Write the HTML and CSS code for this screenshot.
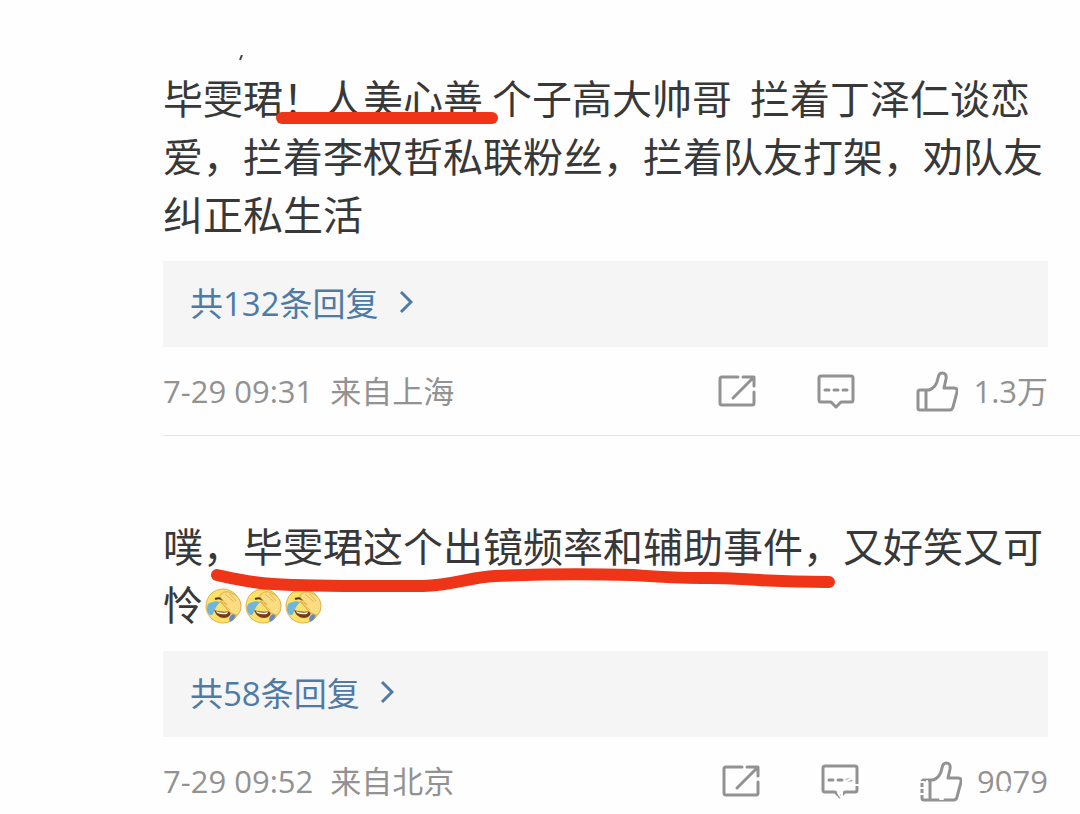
FILE: index.html
```
<!DOCTYPE html>
<html lang="zh-CN">
<head>
  <meta charset="UTF-8">
  <meta name="viewport" content="width=device-width, initial-scale=1.0">
  <title>评论</title>
  <link rel="stylesheet" href="styles.css">
</head>
<body>
  <!-- shared icons -->
  <svg class="sprite" aria-hidden="true">
    <symbol id="icon-share" viewBox="0 0 38 38">
      <path d="M20 5H4q-2 0-2 2v24q0 2 2 2h30q2 0 2-2V20M25 5h11v9M35 6L15 26"/>
    </symbol>
    <symbol id="icon-comment" viewBox="0 0 38 38">
      <path d="M4 4h30q2 0 2 2v22q0 2-2 2h-10l-5 5-5-5H4q-2 0-2-2V6q0-2 2-2z"/>
      <path d="M8 18h4M17 18h4M26 18h4"/>
    </symbol>
    <symbol id="icon-like" viewBox="0 0 42 42">
      <path d="M10 20h3c6-2 8-6 9-12q1-5 4-5 5 0 4 6l-2 9h10q4 0 3 4l-4 15q-1 3-3 3H4q-2 0-2-2V22q0-2 2-2h6v19"/>
    </symbol>
    <symbol id="icon-laugh" viewBox="0 0 40 40">
      <circle cx="20" cy="20" r="17" fill="#fbe06a" stroke="#e0b445"/>
      <path d="M11 24q8 3 17 1 0 7-7 7-7 0-10-8z" fill="#7a3a16"/>
      <path d="M13 25q6 3 12 1l-1 2q-5 1-10-1z" fill="#fff"/>
      <path d="M12 13q5-2 8 1" fill="none" stroke="#4f3a1e" stroke-width="2"/>
      <path d="M5 18q6-4 12-2-4 4-6 9-1 5-4 4-5-4-2-11z" fill="#6fb6dd"/>
      <path d="M26 33q2-6 7-5-1 6-6 8z" fill="#6688c4"/>
      <path d="M18 8q5-4 10-1 9 3 10 12 0 9-5 10-6-1-10-7l-6-7 7 4-7-8q0-2 1-3z" fill="#fbdc80" stroke="#dfae4c"/>
      <path d="M22 8l9 8M27 8l6 7M17 16l10 8" fill="none" stroke="#e3b456"/>
    </symbol>
  </svg>

  <main class="comments">
    <div class="cut-line" aria-hidden="true"><svg viewBox="0 0 6 6"><path d="M4 0L2 5"/></svg></div>

    <article class="comment">
      <p class="text">毕雯珺！人美心善&nbsp;个子高大帅哥&nbsp;&nbsp;拦着丁泽仁谈恋爱，拦着李权哲私联粉丝，拦着队友打架，劝队友纠正私生活
        <svg class="stroke stroke-short" viewBox="0 0 224 14"><path d="M7 7H217"/></svg>
      </p>
      <a class="replies" href="#">共132条回复<svg viewBox="0 0 14 24"><path d="M2 2l10 10L2 22"/></svg></a>
      <footer class="meta">
        <span class="info"><time>7-29 09:31</time><span>来自上海</span></span>
        <button type="button" aria-label="转发"><svg><use href="#icon-share"/></svg></button>
        <button type="button" aria-label="评论"><svg><use href="#icon-comment"/></svg></button>
        <button type="button" class="like"><svg><use href="#icon-like"/></svg>1.3万</button>
      </footer>
    </article>

    <article class="comment">
      <p class="text">噗，毕雯珺这个出镜频率和辅助事件，又好笑又可怜<svg class="emoji" role="img" aria-label="笑哭"><use href="#icon-laugh"/></svg><svg class="emoji" role="img" aria-label="笑哭"><use href="#icon-laugh"/></svg><svg class="emoji" role="img" aria-label="笑哭"><use href="#icon-laugh"/></svg>
        <svg class="stroke stroke-long" viewBox="0 0 624 26"><path d="M6 7C24 11 40 15 62 16C110 19 170 18 212 18C242 17 260 9 284 8Q350 5 422 7C450 9 460 10 490 10C530 9 540 14 618 14"/></svg>
      </p>
      <a class="replies" href="#">共58条回复<svg viewBox="0 0 14 24"><path d="M2 2l10 10L2 22"/></svg></a>
      <footer class="meta">
        <span class="info"><time>7-29 09:52</time><span>来自北京</span></span>
        <button type="button" aria-label="转发"><svg><use href="#icon-share"/></svg></button>
        <button type="button" aria-label="评论"><svg><use href="#icon-comment"/></svg></button>
        <button type="button" class="like"><svg><use href="#icon-like"/></svg>9079</button>
        <!-- white scratches across the icons and the count -->
        <svg class="scratches" viewBox="0 0 230 40" aria-hidden="true">
          <path d="M24 29v10M28 20l8-3M34 24h8M20 32l4 6M98 21h8M98 27h8M98 33h8M109 20v16M122 38h3M139 21l-4 12M158 29h10M162 22l-3 12M176 19v14M180 31h8M187 18l4 6"/>
        </svg>
      </footer>
    </article>
  </main>
</body>
</html>
```

FILE: styles.css
```
body {
  margin: 0;
  background-color: #fefefe;
  color: #383838;
  font-family: "Open Sans", "Noto Sans CJK SC", sans-serif;
}

.sprite {
  position: absolute;
  width: 0;
  height: 0;
}

.comments {
  padding-left: 163px;
}

.cut-line {
  height: 68px;
}

.cut-line svg {
  display: block;
  width: 6px;
  height: 6px;
  padding: 55px 0 0 75px;
  fill: none;
  stroke: #444;
  stroke-width: 2;
}

.comment + .comment {
  padding-top: 80px;
  border-top: 1px solid #e4e4e4;
}

.text {
  position: relative;
  margin: 0 32px 19px 0;
  font-family: "Noto Sans CJK SC", sans-serif;
  font-size: 40px;
  line-height: 58px;
}

/* red marker lines over the text */
.stroke {
  position: absolute;
  fill: none;
  stroke: #ee3517;
  stroke-width: 12;
  stroke-linecap: round;
  stroke-linejoin: round;
}

.stroke-short {
  left: 112px;
  top: 43px;
  width: 224px;
  height: 14px;
}

.stroke-long {
  left: 48px;
  top: 52px;
  width: 624px;
  height: 26px;
}

.emoji {
  width: 40px;
  height: 40px;
  vertical-align: -6px;
}

.replies {
  display: flex;
  align-items: center;
  gap: 20px;
  height: 82px;
  margin-right: 32px;
  padding: 0 0 4px 27px;
  background-color: #f5f5f5;
  color: #4d7ba6;
  font-size: 33px;
  text-decoration: none;
}

.replies svg {
  width: 14px;
  height: 24px;
  fill: none;
  stroke: currentColor;
  stroke-width: 3;
}

.meta {
  position: relative;
  display: flex;
  align-items: center;
  gap: 61px;
  height: 88px;
  padding-right: 32px;
  color: #929292;
  font-size: 31px;
  line-height: 40px;
}

.info {
  display: flex;
  gap: 17px;
  margin-right: auto;
}

.meta button {
  display: flex;
  align-items: center;
  padding: 0;
  border: none;
  background: none;
  color: inherit;
  font: inherit;
  cursor: pointer;
}

.meta svg {
  width: 38px;
  height: 38px;
  fill: none;
  stroke: currentColor;
  stroke-width: 3;
  stroke-linecap: round;
  stroke-linejoin: round;
}

.meta .like {
  gap: 15px;
}

.meta .like svg {
  width: 42px;
  height: 42px;
}

.meta .scratches {
  position: absolute;
  right: 32px;
  top: 24px;
  width: 230px;
  height: 40px;
  stroke: #fefefe;
  stroke-width: 2;
  pointer-events: none;
}
```
